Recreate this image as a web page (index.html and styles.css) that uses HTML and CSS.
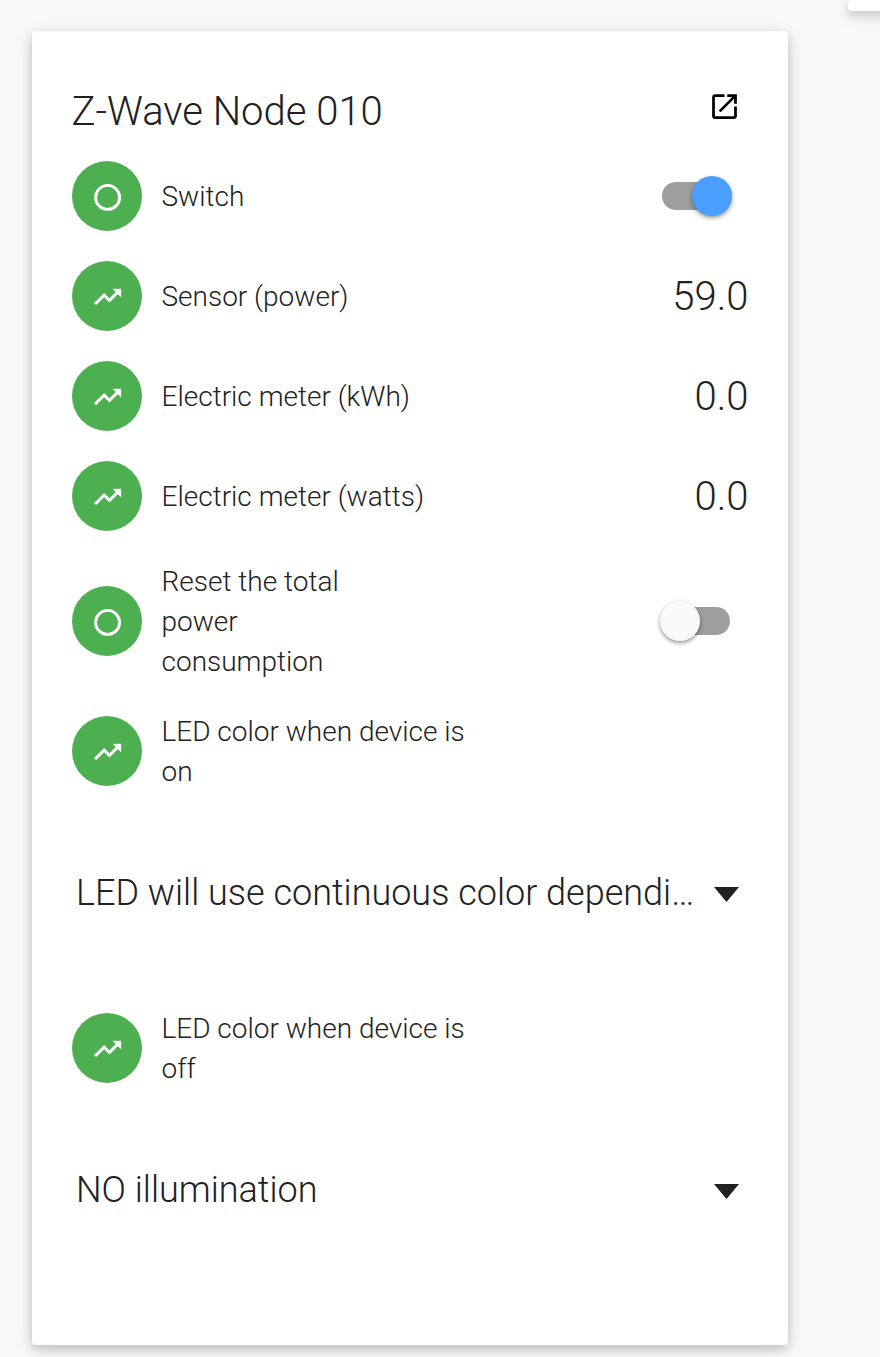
FILE: index.html
```html
<!DOCTYPE html>
<html lang="en">
<head>
<meta charset="utf-8">
<title>Z-Wave Node 010</title>
<link rel="stylesheet" href="styles.css">
</head>
<body>
<svg class="defs" aria-hidden="true">
  <symbol id="ring" viewBox="0 0 24 24"><circle cx="11.700" cy="12.300" r="9" fill="none" stroke="#fff" stroke-width="2.200"/></symbol>
  <symbol id="trend" viewBox="0 0 24 24"><path transform="translate(-.3 0)" stroke="#fff" stroke-width=".3" d="M16 6l2.290 2.290-4.880 4.880-4-4L2 16.590 3.410 18l6-6 4 4 6.300-6.290L22 12V6z"/></symbol>
  <symbol id="open" viewBox="0 0 24 24"><path d="M19 19H5V5h7V3H5c-1.110 0-2 .9-2 2v14c0 1.100.89 2 2 2h14c1.100 0 2-.9 2-2v-7h-2v7zM14 3v2h3.590l-9.830 9.830 1.410 1.410L19 6.410V10h2V3h-7z"/></symbol>
</svg>
<div class="board">
  <main class="card">
    <header class="header"><h1 class="title">Z-Wave Node 010</h1><svg class="open"><use href="#open"/></svg></header>
    <div class="row"><span class="badge"><svg><use href="#ring"/></svg></span><span class="label">Switch</span><span class="toggle on"></span></div>
    <div class="row"><span class="badge"><svg><use href="#trend"/></svg></span><span class="label">Sensor (power)</span><span class="value">59.0</span></div>
    <div class="row"><span class="badge"><svg><use href="#trend"/></svg></span><span class="label">Electric meter (kWh)</span><span class="value">0.0</span></div>
    <div class="row"><span class="badge"><svg><use href="#trend"/></svg></span><span class="label">Electric meter (watts)</span><span class="value">0.0</span></div>
    <div class="row tall"><span class="badge"><svg><use href="#ring"/></svg></span><span class="label">Reset the total<br>power<br>consumption</span><span class="toggle"></span></div>
    <div class="row"><span class="badge"><svg><use href="#trend"/></svg></span><span class="label">LED color when device is<br>on</span></div>
    <div class="select"><span class="choice">LED will use continuous color dependi…</span><svg class="arrow" viewBox="0 0 25 15" preserveAspectRatio="none"><path d="M0 0h25L12.500 15z"/></svg></div>
    <div class="row"><span class="badge"><svg><use href="#trend"/></svg></span><span class="label">LED color when device is<br>off</span></div>
    <div class="select"><span class="choice">NO illumination</span><svg class="arrow" viewBox="0 0 25 15" preserveAspectRatio="none"><path d="M0 0h25L12.500 15z"/></svg></div>
  </main>
  <aside class="neighbor"></aside>
</div>
</body>
</html>
```
FILE: styles.css
```css
* { box-sizing: border-box; }
body { margin: 0; background: #f9f9f9; color: #212121; font-family: Roboto, sans-serif; font-weight: 300; overflow: hidden; }
.defs { display: none; }
.board { display: flex; align-items: flex-start; height: 1357px; padding-left: 32px; gap: 60px; overflow: hidden; }
.card { flex: none; width: 756px; height: 1314px; margin-top: 31px; padding: 50px 40px 0; }
.card, .neighbor { background: #fff; border-radius: 4px; box-shadow: 0 4px 10px rgba(0,0,0,.16), 0 4px 20px rgba(0,0,0,.12); }
.neighbor { flex: none; width: 100px; height: 11px; }
.header { display: flex; justify-content: space-between; height: 65px; }
.title { margin: 1px 0 0 -0.5px; font-size: 40px; line-height: 60px; font-weight: 300; }
.open { width: 33px; height: 33px; margin: 9px 7px 0 0; fill: #000; }
.row { display: flex; align-items: center; height: 100px; }
.tall { height: 150px; margin-bottom: 5px; }
.badge { display: flex; align-items: center; justify-content: center; flex: none; width: 70px; height: 70px; border-radius: 50%; background: #4caf50; }
.badge svg { width: 32px; height: 32px; margin: 2px 0 0 2px; fill: #fff; }
.label { flex: 1; margin-left: 19.5px; padding-top: 2px; font-size: 28px; line-height: 40px; }
.value { padding-top: 2px; margin-right: -0.5px; font-size: 40px; line-height: 50px; }
.toggle { display: flex; align-items: center; width: 68px; height: 28px; margin-right: 18px; border-radius: 14px; background: #9e9e9e; }
.toggle::before { content: ""; width: 40px; height: 40px; margin-left: -2px; flex: none; border-radius: 50%; background: #fafafa; box-shadow: 0 2px 4px rgba(0,0,0,.42); }
.toggle.on::before { margin-left: 30px; background: #4a9eff; }
.select { display: flex; align-items: center; height: 197px; padding: 0 9px 13px 4px; }
.choice { width: 622px; font-size: 36px; line-height: 50px; white-space: nowrap; }
.arrow { width: 25px; height: 15px; margin: 3px 0 0 auto; fill: #212121; }
```
